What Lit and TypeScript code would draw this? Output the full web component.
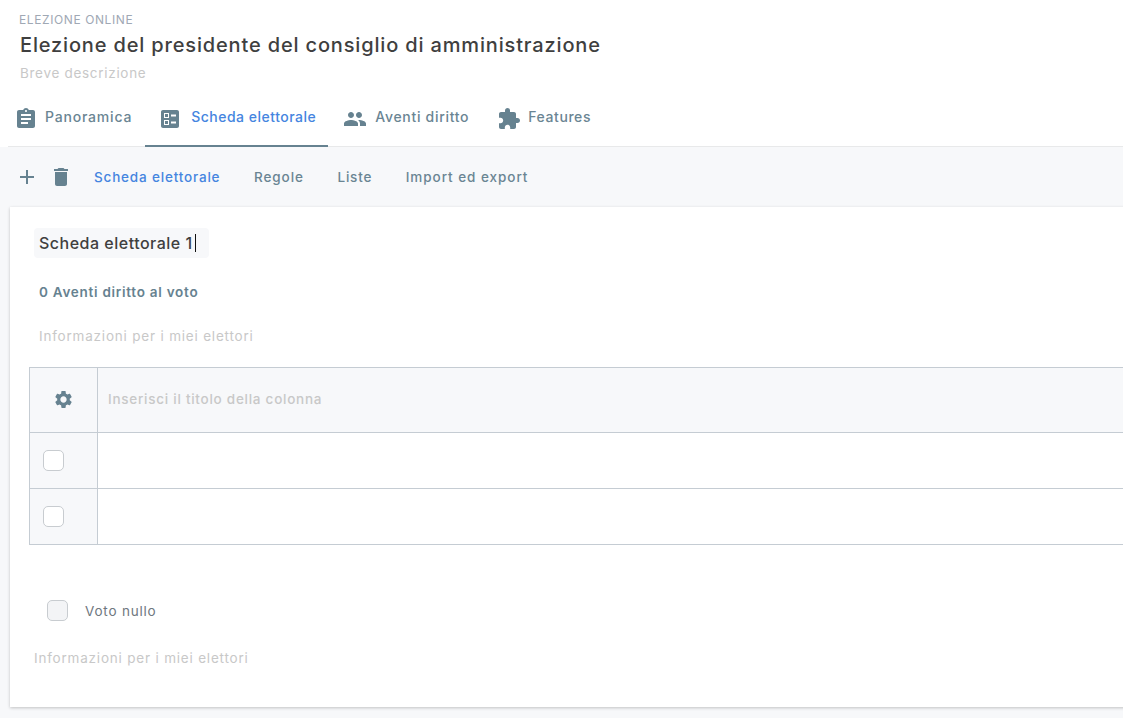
import { LitElement, html, css, svg } from "lit";
import { customElement } from "lit/decorators.js";

const P = {
  assignment: "M19 3h-4.18C14.4 1.84 13.3 1 12 1c-1.3 0-2.4.84-2.82 2H5c-1.1 0-2 .9-2 2v14c0 1.1.9 2 2 2h14c1.1 0 2-.9 2-2V5c0-1.1-.9-2-2-2zm-7 0c.55 0 1 .45 1 1s-.45 1-1 1-1-.45-1-1 .45-1 1-1zm2 14H7v-2h7v2zm3-4H7v-2h10v2zm0-4H7V7h10v2z",
  ballot: "M13 9.5h5v-2h-5v2zm0 7h5v-2h-5v2zm6 4.5H5c-1.1 0-2-.9-2-2V5c0-1.1.9-2 2-2h14c1.1 0 2 .9 2 2v14c0 1.1-.9 2-2 2zM6 11h5V6H6v5zm1-4h3v3H7V7zM6 18h5v-5H6v5zm1-4h3v3H7v-3z",
  people: "M16 11c1.66 0 2.99-1.34 2.99-3S17.66 5 16 5c-1.66 0-3 1.34-3 3s1.34 3 3 3zm-8 0c1.66 0 2.99-1.34 2.99-3S9.66 5 8 5C6.34 5 5 6.34 5 8s1.34 3 3 3zm0 2c-2.33 0-7 1.17-7 3.5V19h14v-2.5c0-2.33-4.67-3.5-7-3.5zm8 0c-.29 0-.62.02-.97.05 1.16.84 1.97 1.97 1.97 3.45V19h6v-2.5c0-2.33-4.67-3.5-7-3.5z",
  extension: "M20.5 11H19V7c0-1.1-.9-2-2-2h-4V3.5C13 2.12 11.88 1 10.5 1S8 2.12 8 3.5V5H4c-1.1 0-1.99.9-1.99 2v3.8H3.5c1.49 0 2.7 1.21 2.7 2.7s-1.21 2.7-2.7 2.7H2V20c0 1.1.9 2 2 2h3.8v-1.5c0-1.49 1.21-2.7 2.7-2.7 1.49 0 2.7 1.21 2.7 2.7V22H17c1.1 0 2-.9 2-2v-4h1.5c1.38 0 2.5-1.12 2.5-2.5S21.88 11 20.5 11z",
  settings: "M19.14 12.94c.04-.3.06-.61.06-.94 0-.32-.02-.64-.07-.94l2.03-1.58c.18-.14.23-.41.12-.61l-1.92-3.32c-.12-.22-.37-.29-.59-.22l-2.39.96c-.5-.38-1.03-.7-1.62-.94l-.36-2.54c-.04-.24-.24-.41-.48-.41h-3.84c-.24 0-.43.17-.47.41l-.36 2.54c-.59.24-1.13.57-1.62.94l-2.39-.96c-.22-.08-.47 0-.59.22L2.74 8.87c-.12.21-.08.47.12.61l2.03 1.58c-.05.3-.09.63-.09.94s.02.64.07.94l-2.03 1.58c-.18.14-.23.41-.12.61l1.92 3.32c.12.22.37.29.59.22l2.39-.96c.5.38 1.03.7 1.62.94l.36 2.54c.05.24.24.41.48.41h3.84c.24 0 .44-.17.47-.41l.36-2.54c.59-.24 1.13-.56 1.62-.94l2.39.96c.22.08.47 0 .59-.22l1.92-3.32c.12-.22.07-.47-.12-.61l-2.01-1.58zM12 15.6c-1.98 0-3.6-1.62-3.6-3.6s1.62-3.6 3.6-3.6 3.6 1.62 3.6 3.6-1.62 3.6-3.6 3.6z",
  del: "M6 19c0 1.1.9 2 2 2h8c1.1 0 2-.9 2-2V7H6v12zM19 4h-3.5l-1-1h-5l-1 1H5v2h14V4z",
  add: "M19 13h-6v6h-2v-6H5v-2h6V5h2v6h6v2z",
};
const icon = (d: string, cls = "") => html`<svg class="icon ${cls}" viewBox="0 0 24 24" width="24" height="24">${svg`<path d=${d}></path>`}</svg>`;

@customElement("app-root")
export class AppRoot extends LitElement {
  static styles = css`
    :host { display: block; width: 1123px; height: 718px; overflow: hidden; background: #f7f8fa; font-family: "Inter", "Liberation Sans", sans-serif; position: relative; }
    .icon { fill: #668290; flex: none; display: block; }
    .header { background: #fff; height: 147px; padding-top: 12px; box-sizing: border-box; display: flex; flex-direction: column; }
    .kicker { margin-left: 19px; font-size: 12px; line-height: 15px; color: #a0a8b4; letter-spacing: 0.6px; }
    .title { margin: 5px 0 0 20px; font-size: 20px; line-height: 26px; font-weight: 500; color: #3f3f3f; letter-spacing: 0.84px; }
    .desc { margin: 7px 0 0 20px; font-size: 13.5px; line-height: 16px; color: #c8c8c8; letter-spacing: 0.7px; }
    .tabs { display: flex; margin: 16px 0 0 8px; padding-left: 6px; border-bottom: 1px solid #e8e9ea; height: 0; flex: 1; align-items: stretch; }
    .tab { display: flex; align-items: flex-start; height: 50px; padding-top: 10px; font-size: 14px; line-height: 20px; font-weight: 500; color: #6a8593; box-sizing: border-box; white-space: nowrap; border-bottom: 2px solid transparent; margin-bottom: -1px; }
    .t1 { gap: 7px; padding-right: 13px; letter-spacing: 0.8px; }
    .t2 { gap: 9px; padding-left: 13px; padding-right: 12px; letter-spacing: 0.5px; }
    .t3 { gap: 8px; padding-left: 15px; padding-right: 13px; letter-spacing: 0.7px; }
    .t4 { gap: 7px; padding-left: 15px; letter-spacing: 0.575px; }
    .tab.on { border-bottom-color: #668290; }
    .tab.on span, .link.on { color: #4585e0; }
    .subnav { display: flex; align-items: center; height: 60px; padding-left: 15px; }
    .subnav .icon.t { margin-left: 10px; }
    .links { display: flex; gap: 33.5px; margin-left: 21px; }
    .link { font-size: 13.5px; font-weight: 500; color: #6a8593; letter-spacing: 0.82px; white-space: nowrap; }
    .link.wide { letter-spacing: 0.95px; }
    .card { margin-left: 10px; width: 1300px; height: 500px; background: #fff; box-shadow: 0 1px 3px rgba(0,0,0,.22); box-sizing: border-box; padding: 21px 0 0 24px; display: flex; flex-direction: column; align-items: flex-start; }
    .name { width: 175px; height: 30px; background: #f7f8fa; border-radius: 4px; padding-left: 5px; box-sizing: border-box; display: flex; align-items: center; font-size: 16px; font-weight: 500; color: #3f3f3f; letter-spacing: 0.5px; }
    .caret { display: block; width: 1px; height: 18px; background: #111; margin-left: 2px; }
    .count { margin: 25px 0 0 5px; font-size: 13.5px; line-height: 18px; font-weight: 600; color: #668290; letter-spacing: 0.73px; }
    .info { font-size: 13.5px; line-height: 18px; color: #c8c8c8; letter-spacing: 0.8px; white-space: nowrap; }
    .info.a { margin: 26px 0 0 5px; }
    .table { margin: 22px 0 0 -5px; width: 1270px; display: grid; grid-template-columns: 68px 1fr; grid-template-rows: 65px 56px 56px; border: solid #c5ccd3; border-width: 1px 0 0 1px; box-sizing: border-box; }
    .c { border: solid #c5ccd3; border-width: 0 1px 1px 0; display: flex; align-items: center; box-sizing: border-box; }
    .c.shade { background: #f7f8fa; }
    .c.center { justify-content: center; padding-right: 1px; padding-bottom: 1px; }
    .c.center .icon { width: 21px; height: 21px; }
    .c.chk { padding-left: 13px; }
    .ph { padding-left: 10px; font-size: 13.5px; font-weight: 500; color: #c8c8c8; letter-spacing: 0.74px; margin-top: -2px; }
    .box { width: 21px; height: 21px; box-sizing: border-box; border: 1px solid #c8ccd0; border-radius: 5px; background: #fff; }
    .null { display: flex; align-items: center; gap: 17px; margin: 55px 0 0 13px; font-size: 13.5px; color: #6f7780; letter-spacing: 0.8px; }
    .null .box { background: #f3f4f6; }
    .info.b { margin-top: 28px; }
  `;
  render() {
    return html`
      <div class="header">
        <div class="kicker">ELEZIONE ONLINE</div>
        <div class="title">Elezione del presidente del consiglio di amministrazione</div>
        <div class="desc">Breve descrizione</div>
        <div class="tabs">
          <div class="tab t1">${icon(P.assignment)}<span>Panoramica</span></div>
          <div class="tab t2 on">${icon(P.ballot)}<span>Scheda elettorale</span></div>
          <div class="tab t3">${icon(P.people)}<span>Aventi diritto</span></div>
          <div class="tab t4">${icon(P.extension)}<span>Features</span></div>
        </div>
      </div>
      <div class="subnav">
        ${icon(P.add)}${icon(P.del, "t")}
        <div class="links">
          <span class="link on">Scheda elettorale</span>
          <span class="link wide">Regole</span>
          <span class="link">Liste</span>
          <span class="link wide">Import ed export</span>
        </div>
      </div>
      <div class="card">
        <div class="name">Scheda elettorale 1<i class="caret"></i></div>
        <div class="count">0 Aventi diritto al voto</div>
        <div class="info a">Informazioni per i miei elettori</div>
        <div class="table">
          <div class="c shade center">${icon(P.settings)}</div>
          <div class="c shade"><span class="ph">Inserisci il titolo della colonna</span></div>
          <div class="c shade chk"><div class="box"></div></div><div class="c"></div>
          <div class="c shade chk"><div class="box"></div></div><div class="c"></div>
        </div>
        <div class="null"><div class="box"></div><span>Voto nullo</span></div>
        <div class="info b">Informazioni per i miei elettori</div>
      </div>
    `;
  }
}
